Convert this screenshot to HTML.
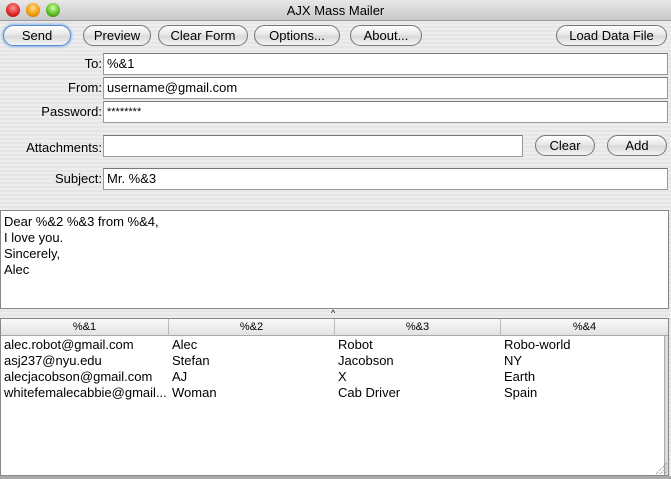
<!DOCTYPE html>
<html><head><style>
*{margin:0;padding:0;box-sizing:border-box}
body{width:671px;height:479px;overflow:hidden;font-family:"Liberation Sans",sans-serif;font-size:13px;color:#000;
background:repeating-linear-gradient(#ededed 0,#ededed 2px,#e6e6e6 2px,#e6e6e6 4px);position:relative}
.a{position:absolute}
.title{left:0;top:0;width:671px;height:21px;background:linear-gradient(#e8e8e8,#c8c8c8);border-bottom:1px solid #999;text-align:center;line-height:21px;font-size:13px}
.dot{width:14px;height:14px;border-radius:50%;top:3px}
.btn{height:21px;border:1px solid #777;border-radius:11px;background:linear-gradient(#fff,#e4e4e4 50%,#d8d8d8 51%,#f4f4f4);text-align:center;line-height:19px;font-size:13px}
.lbl{text-align:right;line-height:22px}
.fld{background:#fff;border:1px solid #999;border-top-color:#777;height:22px;line-height:20px;padding-left:3px}
.cell{position:absolute;line-height:16px;padding-left:3px}
</style></head><body>
<div class="a title">AJX Mass Mailer</div>
<div class="a dot" style="left:6px;background:radial-gradient(circle at 50% 35%,#f99,#d22 60%,#911)"></div>
<div class="a dot" style="left:26px;background:radial-gradient(circle at 50% 35%,#fd9,#e90 60%,#a60)"></div>
<div class="a dot" style="left:46px;background:radial-gradient(circle at 50% 35%,#cf9,#5b2 60%,#360)"></div>

<div class="a btn" style="left:3px;top:25px;width:68px;border-color:#5a8ad0;box-shadow:0 0 2px 1px #8ab4ec">Send</div>
<div class="a btn" style="left:83px;top:25px;width:68px">Preview</div>
<div class="a btn" style="left:158px;top:25px;width:90px">Clear Form</div>
<div class="a btn" style="left:254px;top:25px;width:86px">Options...</div>
<div class="a btn" style="left:350px;top:25px;width:72px">About...</div>
<div class="a btn" style="left:556px;top:25px;width:111px">Load Data File</div>

<div class="a lbl" style="left:0;top:53px;width:102px">To:</div>
<div class="a fld" style="left:103px;top:53px;width:565px">%&amp;1</div>
<div class="a lbl" style="left:0;top:77px;width:102px">From:</div>
<div class="a fld" style="left:103px;top:77px;width:565px">username@gmail.com</div>
<div class="a lbl" style="left:0;top:101px;width:102px">Password:</div>
<div class="a fld" style="left:103px;top:101px;width:565px;font-size:11px">********</div>
<div class="a lbl" style="left:0;top:137px;width:102px">Attachments:</div>
<div class="a fld" style="left:103px;top:135px;width:420px"></div>
<div class="a btn" style="left:535px;top:135px;width:60px">Clear</div>
<div class="a btn" style="left:607px;top:135px;width:60px">Add</div>
<div class="a lbl" style="left:0;top:168px;width:102px">Subject:</div>
<div class="a fld" style="left:103px;top:168px;width:565px">Mr. %&amp;3</div>

<div class="a" style="left:0;top:210px;width:669px;height:99px;background:#fff;border:1px solid #888;padding:3px 3px;line-height:16px">Dear %&amp;2 %&amp;3 from %&amp;4,<br>I love you.<br>Sincerely,<br>Alec</div>
<div class="a" style="left:331px;top:309px;font-size:9px;line-height:9px">^</div>

<div class="a" style="left:0;top:318px;width:669px;height:158px;background:#fff;border:1px solid #888">
<div class="a" style="left:0;top:0;width:667px;height:17px;background:linear-gradient(#fafafa,#e2e2e2);border-bottom:1px solid #aaa;font-size:11px;line-height:17px">
<div class="a" style="left:0;width:168px;text-align:center;border-right:1px solid #bbb">%&amp;1</div>
<div class="a" style="left:168px;width:166px;text-align:center;border-right:1px solid #bbb">%&amp;2</div>
<div class="a" style="left:334px;width:166px;text-align:center;border-right:1px solid #bbb">%&amp;3</div>
<div class="a" style="left:500px;width:167px;text-align:center">%&amp;4</div>
</div>
<div class="cell" style="left:0;top:18px">alec.robot@gmail.com<br>asj237@nyu.edu<br>alecjacobson@gmail.com<br>whitefemalecabbie@gmail...</div>
<div class="cell" style="left:168px;top:18px">Alec<br>Stefan<br>AJ<br>Woman</div>
<div class="cell" style="left:334px;top:18px">Robot<br>Jacobson<br>X<br>Cab Driver</div>
<div class="cell" style="left:500px;top:18px">Robo-world<br>NY<br>Earth<br>Spain</div>
<div class="a" style="right:0;top:17px;width:4px;height:139px;border-left:1px solid #aaa;background:#ddd"></div>
<svg class="a" style="right:0;bottom:0" width="15" height="15"><path d="M3 14L14 3M7 14L14 7M11 14L14 11" stroke="#777" stroke-dasharray="1 1"/></svg>
</div>
<div class="a" style="left:0;top:476px;width:671px;height:3px;background:#aaa"></div>
</body></html>
